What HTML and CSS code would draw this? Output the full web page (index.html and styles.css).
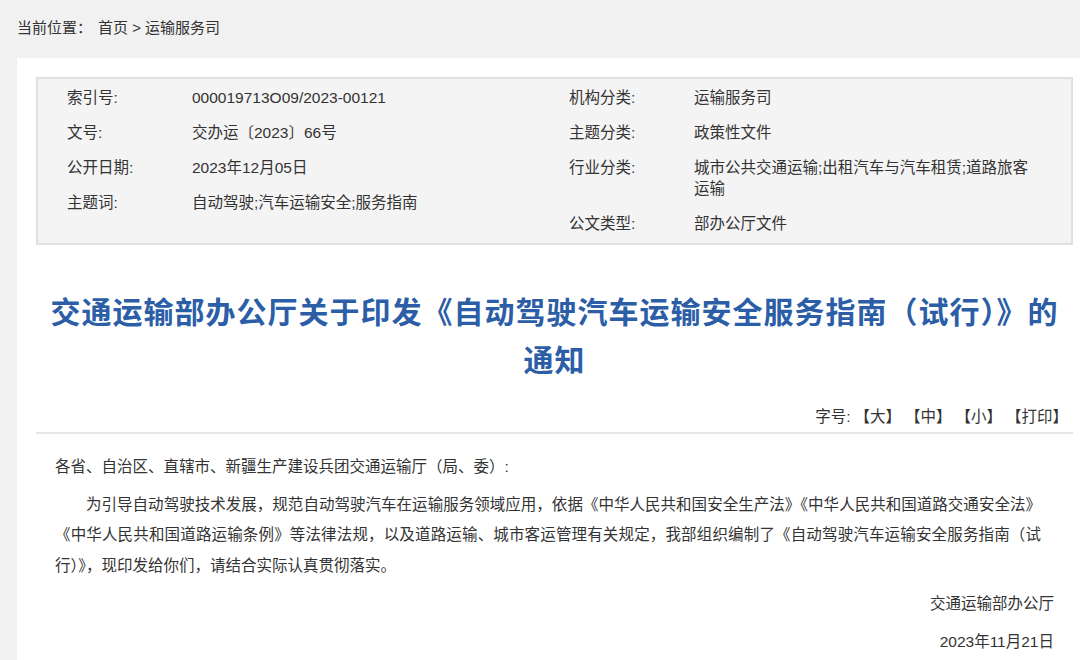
FILE: index.html
```html
<!DOCTYPE html>
<html lang="zh-CN">
<head>
<meta charset="utf-8">
<title>交通运输部办公厅关于印发《自动驾驶汽车运输安全服务指南（试行）》的通知</title>
<link rel="stylesheet" href="styles.css">
</head>
<body>
<div class="crumb">当前位置：<span class="crumb-links">首页 &gt; 运输服务司</span></div>
<div class="panel">
  <div class="meta">
    <div class="meta-col meta-left">
      <div class="row"><span class="label">索引号:</span><span class="value">000019713O09/2023-00121</span></div>
      <div class="row"><span class="label">文号:</span><span class="value">交办运〔2023〕66号</span></div>
      <div class="row"><span class="label">公开日期:</span><span class="value">2023年12月05日</span></div>
      <div class="row"><span class="label">主题词:</span><span class="value">自动驾驶;汽车运输安全;服务指南</span></div>
    </div>
    <div class="meta-col meta-right">
      <div class="row"><span class="label">机构分类:</span><span class="value">运输服务司</span></div>
      <div class="row"><span class="label">主题分类:</span><span class="value">政策性文件</span></div>
      <div class="row"><span class="label">行业分类:</span><span class="value">城市公共交通运输;出租汽车与汽车租赁;道路旅客运输</span></div>
      <div class="row"><span class="label">公文类型:</span><span class="value">部办公厅文件</span></div>
    </div>
  </div>
  <h1 class="title">交通运输部办公厅关于印发《自动驾驶汽车运输安全服务指南（试行）》的通知</h1>
  <div class="tools">
    <span>字号:</span><span>【大】</span><span>【中】</span><span>【小】</span><span>【打印】</span>
  </div>
  <div class="content">
    <p class="salute">各省、自治区、直辖市、新疆生产建设兵团交通运输厅（局、委）:</p>
    <p class="para">为引导自动驾驶技术发展，规范自动驾驶汽车在运输服务领域应用，依据《中华人民共和国安全生产法》《中华人民共和国道路交通安全法》《中华人民共和国道路运输条例》等法律法规，以及道路运输、城市客运管理有关规定，我部组织编制了《自动驾驶汽车运输安全服务指南（试行）》，现印发给你们，请结合实际认真贯彻落实。</p>
    <p class="sign">交通运输部办公厅</p>
    <p class="sign">2023年11月21日</p>
  </div>
</div>
</body>
</html>
```
FILE: styles.css
```css
html, body {
  margin: 0;
  padding: 0;
}
body {
  background: #f1f1f1;
  font-family: "Liberation Sans", "Noto Sans CJK SC", sans-serif;
  color: #333;
  width: 1080px;
  overflow: hidden;
}
.crumb {
  box-sizing: border-box;
  height: 58px;
  padding: 17px 0 0 17px;
  font-size: 15px;
  line-height: 21px;
  color: #333;
}
.crumb-links {
  margin-left: 6px;
}
.panel {
  background: #fff;
  margin-left: 17px;
  padding: 19px 7px 40px 19px;
  min-height: 700px;
}
.meta {
  display: flex;
  background: #f4f4f4;
  border: 2px solid #e0e0e0;
  padding: 1px 32px 2px 29px;
  font-size: 15.5px;
  line-height: 21px;
  color: #333;
}
.meta-left {
  width: 502px;
  flex: none;
}
.meta-right {
  flex: 1;
}
.row {
  display: flex;
  padding: 7px 0;
}
.label {
  width: 125px;
  flex: none;
}
.value {
  flex: 1;
}
.title {
  margin: 41px 0 0;
  padding: 0 12px;
  text-align: center;
  font-size: 30px;
  letter-spacing: 1px;
  line-height: 48px;
  font-weight: bold;
  color: #2b5ea7;
  font-family: "Noto Sans CJK SC", sans-serif;
}
.tools {
  margin-top: 24px;
  padding: 0 5px 5px 0;
  border-bottom: 2px solid #e6e6e6;
  display: flex;
  justify-content: flex-end;
  gap: 4px;
  font-size: 15.5px;
  line-height: 21px;
  color: #333;
}
.content {
  padding: 18px 19px 0 19px;
  font-size: 15.5px;
  line-height: 30.5px;
  color: #333;
}
.content p {
  margin: 0 0 7.5px;
}
.salute {
  line-height: 30px;
}
.para {
  text-indent: 2em;
  text-align: justify;
  margin-right: 13px !important;
}
.sign {
  text-align: right;
}
```
